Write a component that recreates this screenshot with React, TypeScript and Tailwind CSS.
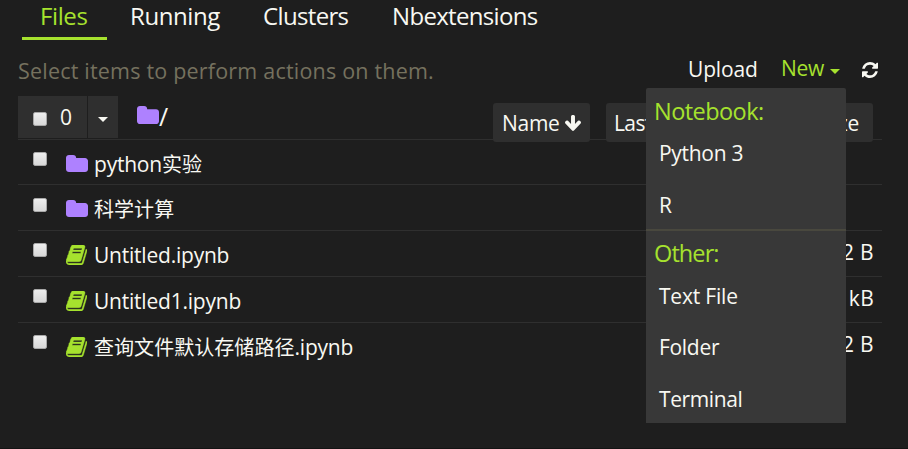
import React from "react";

const BOOK =
  "M1639 478q40 57 18 129l-275 906q-19 64-76.5 107.5t-122.5 43.5h-923q-77 0-148.5-53.5t-99.5-131.5q-24-67-2-127 0-4 3-27t4-37q1-8-3-21.5t-3-19.5q2-11 8-21t16.5-23.5 16.5-23.5q23-38 45-91.5t30-91.5q3-10 .5-30t-.5-28q3-11 17-28t17-23q21-36 42-92t25-90q1-9-2.5-32t.5-28q4-13 22-30.5t22-22.5q19-26 42.5-84.5t27.5-96.5q1-8-3-25.5t-2-26.5q2-8 9-18t18-23 17-21q8-12 16.5-30.5t15-35 16-36 19.5-32 26.5-23.5 36-11.5 47.5 5.5l-1 3q38-9 51-9h761q74 0 114 56t18 130l-274 906q-36 119-71.5 153.5t-128.5 34.5h-869q-27 0-38 15-11 16-1 43 24 70 144 70h923q29 0 56-15.5t35-41.5l300-987q7-22 5-57 38 15 59 43zm-1064 2q-4 13 2 22.5t20 9.5h608q13 0 25.5-9.5t16.5-22.5l21-64q4-13-2-22.5t-20-9.5h-608q-13 0-25.5 9.5t-16.5 22.5zm-83 256q-4 13 2 22.5t20 9.5h608q13 0 25.5-9.5t16.5-22.5l21-64q4-13-2-22.5t-20-9.5h-608q-13 0-25.5 9.5t-16.5 22.5z";
const REFRESH =
  "M1639 1056q0 5-1 7-64 268-268 434.5t-478 166.5q-146 0-282.5-55t-243.5-157l-129 129q-19 19-45 19t-45-19-19-45v-448q0-26 19-45t45-19h448q26 0 45 19t19 45-19 45l-137 137q71 66 161 102t187 36q134 0 250-65t186-179q11-17 53-117 8-23 30-23h192q13 0 22.5 9.5t9.5 22.5zm25-800v448q0 26-19 45t-45 19h-448q-26 0-45-19t-19-45 19-45l138-138q-148-137-349-137-134 0-250 65t-186 179q-11 17-53 117-8 23-30 23h-199q-13 0-22.5-9.5t-9.5-22.5v-7q65-268 270-434.5t480-166.5q146 0 284 55.5t245 156.5l130-129q19-19 45-19t45 19 19 45z";
const ARROW_DOWN =
  "M1675 832q0 53-37 90l-651 652q-39 37-91 37-53 0-90-37l-651-652q-38-36-38-90 0-53 38-91l74-75q39-37 91-37 53 0 90 37l294 294v-704q0-52 38-90t90-38h128q52 0 90 38t38 90v704l294-294q37-37 90-37 52 0 91 37l75 75q37 39 37 91z";
const FOLDER =
  "M1728 608v704q0 92-66 158t-158 66h-1216q-92 0-158-66t-66-158v-960q0-92 66-158t158-66h320q92 0 158 66t66 158v32h672q92 0 158 66t66 158z";

function Icon({ d, box, className }: { d: string; box: string; className: string }) {
  return (
    <svg viewBox={box} preserveAspectRatio="none" fill="currentColor" className={`shrink-0 ${className}`}>
      <path d={d} />
    </svg>
  );
}

function Checkbox({ className = "" }: { className?: string }) {
  return (
    <span
      className={`block size-[14px] shrink-0 rounded-[2px] border border-[#a8a8a8] bg-linear-to-b from-[#eeeeee] to-[#d8d8d8] ${className}`}
    />
  );
}

function Caret({ className }: { className: string }) {
  return (
    <svg viewBox="0 0 10 5" fill="currentColor" className={`h-[5px] w-[10px] shrink-0 ${className}`}>
      <path d="M0 0h10L5 5z" />
    </svg>
  );
}

const tabs = [
  { name: "Running", cls: "ml-[23px] w-[133px] tracking-[-0.4px]" },
  { name: "Clusters", cls: "w-[129px] tracking-[-0.65px]" },
  { name: "Nbextensions", cls: "tracking-[-0.68px]" },
];

const files = [
  { cjk: "", latin: "python", tail: "实验", kind: "folder", size: "", h: "h-[45px]", box: "mt-[12px]" },
  { cjk: "科学计算", latin: "", tail: "", kind: "folder", size: "", h: "h-[46px]", box: "mt-[13px]" },
  { cjk: "", latin: "Untitled.ipynb", tail: "", kind: "notebook", size: "72 B", h: "h-[46px]", box: "mt-[12px]" },
  { cjk: "", latin: "Untitled1.ipynb", tail: "", kind: "notebook", size: "1.2 kB", h: "h-[46px]", box: "mt-[12px]" },
  { cjk: "查询文件默认存储路径", latin: ".ipynb", tail: "", kind: "notebook", size: "72 B", h: "h-[46px]", box: "mt-[12px]" },
];

function NewMenu() {
  return (
    <div className="absolute top-[88px] left-[646px] h-[335px] w-[200px] rounded-t-[2px] bg-[#383838]">
      <div className="h-[46px] pl-[8px] text-[23.5px] leading-[46px] tracking-[-0.55px] text-[#a6e22e]">Notebook:</div>
      <div className="h-[38px] pl-[13px] leading-[38px]">Python 3</div>
      <div className="h-[57px] pl-[13px] leading-[66px]">R</div>
      <div className="h-[2px] bg-[#49483e]" />
      <div className="h-[44px] pl-[8px] text-[23.5px] leading-[44px] tracking-[-0.9px] text-[#a6e22e]">Other:</div>
      <div className="h-[42px] pl-[13px] leading-[42px] tracking-[-0.2px]">Text File</div>
      <div className="h-[60px] pl-[13px] leading-[60px]">Folder</div>
      <div className="h-[44px] pl-[13px] leading-[44px] tracking-[-0.4px]">Terminal</div>
    </div>
  );
}

export default function App() {
  return (
    <div className="relative h-[449px] w-[908px] overflow-hidden border-b border-[#141414] bg-[#1e1e1e] font-['Open_Sans','Noto_Sans_CJK_SC',sans-serif] text-[21px] tracking-[-0.3px] whitespace-nowrap text-[#f8f8f2]">
      <nav className="flex h-[40px] pl-[22px] text-[24px] leading-[32px]">
        <div className="w-[85px] border-b-[3px] border-[#a6e22e] pl-[18px] tracking-[-0.4px] text-[#a6e22e]">Files</div>
        {tabs.map((t) => (
          <div key={t.name} className={t.cls}>{t.name}</div>
        ))}
      </nav>

      <div className="flex h-[56px] pl-[18px] leading-[58px]">
        <div className="w-[670px] text-[21.5px] leading-[61px] tracking-[0.2px] text-[#75715e]">
          Select items to perform actions on them.
        </div>
        <div className="w-[93px] tracking-[-0.15px]">Upload</div>
        <div className="flex w-[81px] text-[#a6e22e]">
          <span className="w-[49px] leading-[57px]">New</span>
          <Caret className="mt-[29px]" />
        </div>
        <Icon d={REFRESH} box="128 128 1536 1536" className="mt-[22px] h-[16px] w-[16px]" />
      </div>

      <main className="mr-[26px] ml-[18px]">
        <header className="flex h-[43px]">
          <div className="flex h-[42px] w-[69px] bg-[#2f2f2f] pl-[15px] leading-[43px]">
            <Checkbox className="mt-[16px] mr-[13px]" />0
          </div>
          <div className="ml-px flex h-[42px] w-[30px] bg-[#2f2f2f]">
            <Caret className="mt-[21px] ml-[10px]" />
          </div>
          <div className="ml-[19px] flex w-[356px] text-[25px] leading-[41px]">
            <Icon d={FOLDER} box="64 128 1664 1408" className="mt-[10px] h-[18px] w-[22px] text-[#ae81ff]" />/
          </div>
          <div className="mt-[7px] flex h-[39px] w-[97px] rounded-[3px] bg-[#2f2f2f] pl-[9px] leading-[40px]">
            <span className="w-[63px]">Name</span>
            <Icon d={ARROW_DOWN} box="117 128 1558 1483" className="mt-[12px] h-[16px] w-[16px]" />
          </div>
          <div className="mt-[7px] ml-[16px] h-[39px] w-[155px] rounded-[3px] bg-[#2f2f2f] pl-[8px] leading-[40px] tracking-[-0.6px]">
            Last Modified
          </div>
          <div className="mt-[7px] ml-[16px] h-[39px] w-[96px] rounded-[3px] bg-[#2f2f2f] pr-[14px] text-right leading-[40px]">
            File size
          </div>
        </header>

        {files.map((f) => (
          <div key={f.cjk + f.latin} className={`flex border-t border-[#2f2f2f] pl-[15px] ${f.h}`}>
            <Checkbox className={`mr-[19px] ${f.box}`} />
            {f.kind === "folder" ? (
              <Icon d={FOLDER} box="64 128 1664 1408" className="mt-[15px] h-[17px] w-[22px] text-[#ae81ff]" />
            ) : (
              <Icon d={BOOK} box="0 128 1664 1536" className="mt-[14px] h-[20px] w-[21px] stroke-[#a6e22e] stroke-[30px] text-[#a6e22e]" />
            )}
            <span className={`leading-[49px] tracking-[-0.22px] ${f.kind === "folder" ? "ml-[6px]" : "ml-[7px]"}`}>
              <span className="text-[20px] tracking-[0.05px]">{f.cjk}</span>
              {f.latin}
              <span className="text-[20px] tracking-[0.05px]">{f.tail}</span>
            </span>
            <span className="ml-auto pr-[8px] leading-[43px] tracking-[0.3px]">{f.size}</span>
          </div>
        ))}
      </main>

      <NewMenu />
    </div>
  );
}
